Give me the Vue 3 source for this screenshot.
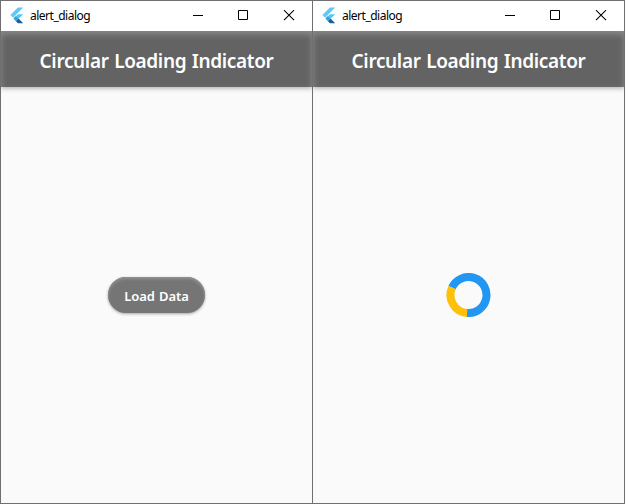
<script setup>
const windows = [
  { id: 1, loading: false },
  { id: 2, loading: true },
]

const cx = 22.5
const cy = 22
const radius = 18

function arc(from, to) {
  const point = (deg) => {
    const a = ((deg - 90) * Math.PI) / 180
    return `${cx + radius * Math.cos(a)} ${cy + radius * Math.sin(a)}`
  }
  return `M${point(from)} A${radius} ${radius} 0 ${to - from > 180 ? 1 : 0} 1 ${point(to)}`
}
</script>

<template>
  <div class="desktop">
    <section v-for="w in windows" :key="w.id" class="window">
      <header class="titlebar">
        <svg class="logo" width="15" height="17" viewBox="0.6 0 15 17">
          <path d="M8.5 .6H13.8L3.8 10.8 1 8Z" fill="#62c8f7" />
          <path d="M8.6 7.2H13.8L9.1 11.7 6.5 9.3Z" fill="#54c5f8" />
          <path d="M4 11.6 6.5 9.1 9.1 11.6 6.5 14.2Z" fill="#29a5e5" />
          <path d="M6.5 14.2 9.1 11.6 13.8 16.2H8.6Z" fill="#135fa0" />
        </svg>
        <span class="name">alert_dialog</span>
        <svg class="controls" width="102" height="11" viewBox="0 0 102 11" fill="none" stroke="#000">
          <path d="M0 5.5H10" />
          <path d="M45.5 .5H54.5V9.5H45.5Z" />
          <path d="M91 .2 101 10.2M101 .2 91 10.2" stroke-width="1.1" />
        </svg>
      </header>
      <div class="appbar"><h1>Circular Loading Indicator</h1></div>
      <main class="content">
        <svg v-if="w.loading" class="spinner" width="45" height="44" fill="none" stroke-width="8">
          <path :d="arc(294, 546.5)" stroke="#2196f3" />
          <path :d="arc(184.5, 294)" stroke="#ffc107" />
        </svg>
        <button v-else class="load">Load Data</button>
      </main>
    </section>
  </div>
</template>

<style>
body {
  background: #fff;
}
</style>

<style scoped>
.desktop {
  box-sizing: border-box;
  display: flex;
  width: 625px;
  height: 504px;
  border: 1px solid #6f6f6f;
  border-left: 0;
}
.window {
  box-sizing: border-box;
  display: flex;
  flex-direction: column;
  width: 312px;
  border-left: 1px solid #6f6f6f;
  background: #fafafa;
}
.titlebar {
  display: flex;
  align-items: flex-start;
  box-sizing: border-box;
  height: 30px;
  padding: 6px 17px 0 9px;
  background: #fff;
}
.logo {
  flex: none;
}
.name {
  margin: 1px 0 0 5px;
  font: 12px/16px "Noto Sans", sans-serif;
  letter-spacing: -0.5px;
  color: #000;
}
.controls {
  flex: none;
  margin: 3px 0 0 auto;
}
.appbar {
  position: relative;
  display: flex;
  align-items: center;
  justify-content: center;
  height: 56px;
  background: #636363;
  box-shadow: inset 0 3px 6px #8c8c8c, 0 1px 5px rgba(0, 0, 0, 0.35);
  clip-path: inset(0 0 -12px 0);
}
h1 {
  margin: 0;
  padding-top: 4px;
  font: 600 19px/26px "Noto Sans", sans-serif;
  letter-spacing: -0.35px;
  word-spacing: 1px;
  white-space: nowrap;
  color: #fff;
}
.content {
  display: flex;
  flex: 1;
  align-items: center;
  justify-content: center;
}
.spinner {
  flex: none;
}
.load {
  box-sizing: border-box;
  width: 97px;
  height: 36px;
  padding: 2px 0 0;
  border: 0;
  border-radius: 18px;
  background: #757575;
  box-shadow: inset 0 2px 3px #929292, 0 1px 3px rgba(0, 0, 0, 0.35);
  font: 600 13px/20px "Noto Sans", sans-serif;
  letter-spacing: -0.1px;
  word-spacing: 1px;
  white-space: nowrap;
  color: #fff;
}
</style>
